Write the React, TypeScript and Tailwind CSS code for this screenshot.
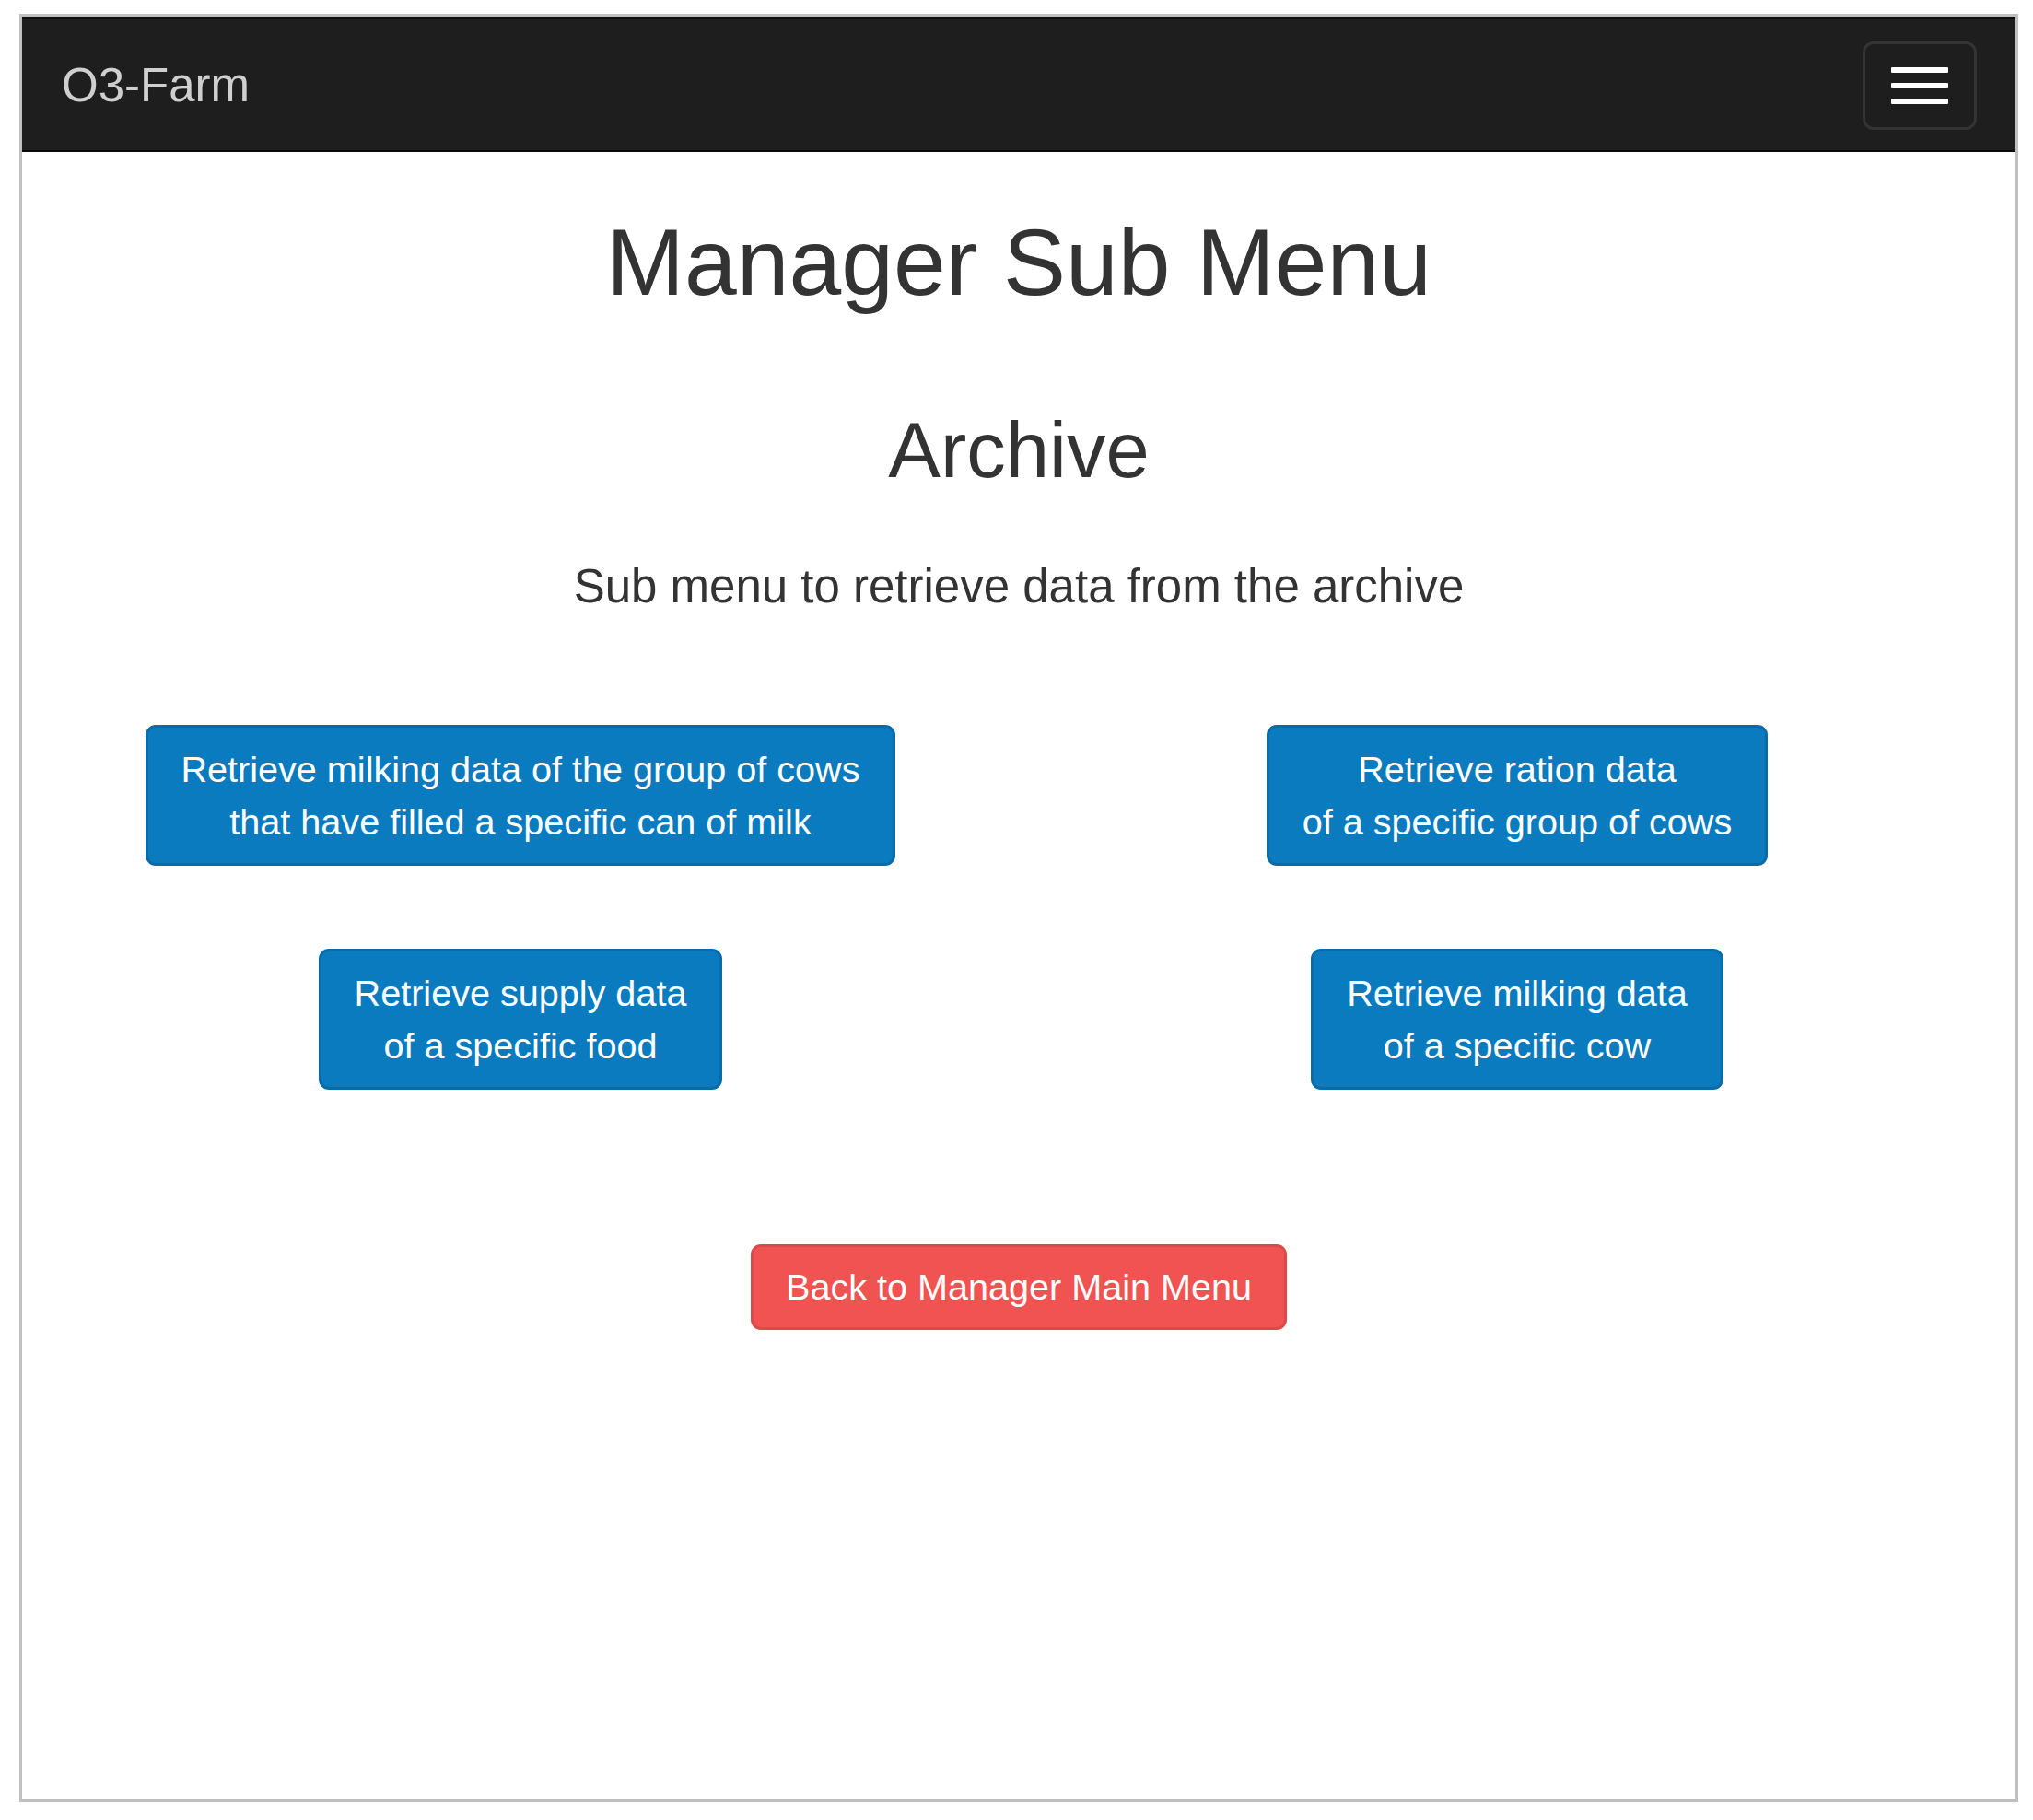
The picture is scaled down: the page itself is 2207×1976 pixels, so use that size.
import React from 'react';

const font = { fontFamily: '"Liberation Sans", Arial, sans-serif' };

const menuButtons = [
    ['Retrieve milking data of the group of cows', 'that have filled a specific can of milk'],
    ['Retrieve ration data', 'of a specific group of cows'],
    ['Retrieve supply data', 'of a specific food'],
    ['Retrieve milking data', 'of a specific cow'],
];

const MenuButton: React.FC<{ lines: string[] }> = ({ lines }) => (
    <button className="bg-[#0b7bbf] border-[3px] border-[#0a6ba6] rounded-[11px] px-[36px] py-[17px] text-white text-[39.6px] leading-[56.5px] text-center whitespace-nowrap">
        {lines.map((l, i) => (
            <div key={i}>{l}</div>
        ))}
    </button>
);

export default function App() {
    return (
        <div className="min-h-[1976px] bg-white pl-[21px] pt-[15px]" style={font}>
            <div className="w-[2170px] h-[1941px] border-[3px] border-[#c0c0c0] flex flex-col">
                <nav className="h-[147px] bg-[#1e1e1e] border-t-[3px] border-b-[2px] border-[#0c0c0c] flex justify-between shrink-0">
                    <span className="ml-[43px] self-center text-[51px] leading-none text-[#cfcfcf]">O3-Farm</span>
                    <button className="self-start mt-[24px] mr-[42px] w-[124px] h-[96px] border-[3px] border-[#343434] rounded-[12px] flex flex-col items-center justify-center gap-[11px]">
                        <span className="block w-[62px] h-[6px] bg-white rounded-[1px]" />
                        <span className="block w-[62px] h-[6px] bg-white rounded-[1px]" />
                        <span className="block w-[62px] h-[6px] bg-white rounded-[1px]" />
                    </button>
                </nav>

                <div className="flex flex-col items-center text-[#333333]">
                    <h1 className="mt-[64px] text-[102px] leading-[112px] font-normal">Manager Sub Menu</h1>
                    <h2 className="mt-[101px] text-[85px] leading-[94px] font-normal">Archive</h2>
                    <p className="mt-[73px] text-[51px] leading-[56px]">Sub menu to retrieve data from the archive</p>

                    <div className="mt-[122px] w-full grid grid-cols-2 gap-y-[90px]">
                        {menuButtons.map((b, i) => (
                            <div key={i} className="flex justify-center">
                                <MenuButton lines={b} />
                            </div>
                        ))}
                    </div>

                    <button className="mt-[168px] bg-[#f05352] border-[3px] border-[#d94b4a] rounded-[11px] px-[35px] py-[15px] text-white text-[39.6px] leading-[56.5px] whitespace-nowrap">
                        Back to Manager Main Menu
                    </button>
                </div>
            </div>
        </div>
    );
}
